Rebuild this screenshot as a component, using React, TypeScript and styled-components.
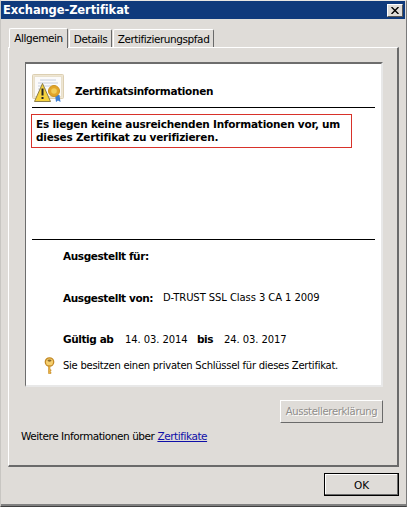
import React from "react";
import styled, { createGlobalStyle } from "styled-components";

const Global = createGlobalStyle`
  html, body { margin: 0; padding: 0; background: #dfdcd8; }
  body { font-family: "DejaVu Sans", "Liberation Sans", sans-serif; font-size: 11px; color: #000; }
`;
const Win = styled.div`
  width: 407px; height: 507px; box-sizing: border-box; overflow: hidden;
  background: #dfdcd8; display: flex; flex-direction: column; padding-right: 1px;
  border-left: 1px solid #c8c6c2; border-top: 1px solid #e8e6e3; border-right: 1px solid #7a7a7a;
  border-bottom: 1px solid #404040; box-shadow: inset 0 -2px 0 #808080;
`;
const TitleBar = styled.div`
  height: 18px; flex: none; background: #0f3a7c; color: #fff; display: flex; align-items: center;
  justify-content: space-between; padding: 0 2px 0 2px; font-weight: 700; font-size: 11.5px; letter-spacing: -0.1px;
`;
const CloseBtn = styled.div`
  width: 16px; height: 13px; background: #dfdcd8; box-sizing: border-box; display: flex; align-items: center; justify-content: center;
  border: 1px solid; border-color: #fff #555 #555 #fff;
`;
const Content = styled.div`
  flex: 1; display: flex; flex-direction: column; padding: 8px 6px 0 7px;
`;
const Tabs = styled.div`
  display: flex; height: 20px; align-items: flex-end; position: relative; z-index: 1; padding-left: 1px; gap: 1px;
`;
const Tab = styled.div<{ $active?: boolean; $w: number }>`
  box-sizing: border-box; background: #dfdcd8; white-space: nowrap; display: flex; align-items: center; justify-content: center;
  height: ${p => (p.$active ? 20 : 18)}px; width: ${p => p.$w}px;
  border: 1px solid; border-color: #fff #6a6a6a transparent #fff; border-bottom: none; border-radius: 2px 2px 0 0;
  font-size: 10.5px; letter-spacing: -0.42px;
  ${p => p.$active ? "margin-bottom: -1px; padding-bottom: 1px;" : "margin-top: 2px;"}
`;
const TabPanel = styled.div`
  box-sizing: border-box; width: 391px; height: 420px; display: flex; flex-direction: column;
  border: 1px solid; border-color: #fff #6a6a6a #6a6a6a #fff; border-width: 1px 2px 2px 1px; padding: 14px 15px 0 16px;
`;
const InfoPanel = styled.div`
  box-sizing: border-box; width: 358px; height: 325px; background: #fff; display: flex; flex-direction: column;
  border-style: solid; border-width: 2px 2px 2px 1px; border-color: #6d6d6d #e8e8e8 #e8e8e8 #6d6d6d;
  padding: 9px 6px 0 6px;
`;
const Header = styled.div`
  height: 34px; flex: none; display: flex; align-items: center; gap: 10px; margin-left: -1px;
`;
const HeaderTitle = styled.div`
  font-weight: 700; font-size: 10.5px; letter-spacing: -0.33px; padding-top: 2px;
`;
const Rule = styled.div`
  height: 1px; flex: none; background: #000; width: 343px;
`;
const Warning = styled.div`
  box-sizing: border-box; width: 321px; height: 34px; margin: 6px 0 91px -1px; flex: none; white-space: nowrap;
  border: 1px solid #d8322a; padding: 3px 4px; font-weight: 700; font-size: 10.5px; letter-spacing: -0.22px; line-height: 13px;
`;
const Row = styled.div<{ $h: number }>`
  height: ${p => p.$h}px; flex: none; display: flex; align-items: center; padding-left: 31px; white-space: nowrap; font-size: 10px;
`;
const Label = styled.span<{ $w?: number }>`
  font-weight: 700; font-size: 10.5px; letter-spacing: -0.4px; ${p => p.$w ? `width: ${p.$w}px; flex: none;` : ""}
`;
const Value = styled.span<{ $w?: number }>`
  letter-spacing: -0.08px; ${p => p.$w ? `width: ${p.$w}px; flex: none;` : ""}
`;
const KeyRow = styled.div`
  display: flex; align-items: center; gap: 6px; height: 20px; padding-left: 11px; white-space: nowrap;
  font-size: 10px; letter-spacing: -0.26px;
`;
const KeyLabel = styled.span`
  margin-left: 1px;
`;
const ActionRow = styled.div`
  display: flex; justify-content: flex-end; padding: 13px 0 0 0; margin-right: -1px;
`;
const IssuerBtn = styled.div`
  box-sizing: border-box; width: 103px; height: 23px; display: flex; align-items: center; justify-content: center;
  color: #8f8d8a; text-shadow: 1px 1px 0 #fff; font-size: 10px; letter-spacing: -0.3px;
  border: 1px solid; border-color: #fff #6a6a6a #6a6a6a #fff;
`;
const MoreInfo = styled.div`
  margin: 6px 0 0 -4px; font-size: 10.5px; letter-spacing: -0.44px; height: 14px; line-height: 14px; white-space: nowrap;
`;
const MoreLink = styled.span`
  color: #0f0fa8; text-decoration: underline;
`;
const Footer = styled.div`
  display: flex; justify-content: flex-end; padding-top: 6px;
`;
const OkBtn = styled.div`
  box-sizing: border-box; width: 75px; height: 23px; display: flex; align-items: center; justify-content: center;
  border: 1px solid #000; box-shadow: inset -1px -1px 0 #6a6a6a, inset 1px 1px 0 #fff; font-size: 10.5px;
`;

const CertIcon = () => (
  <svg width="34" height="32" viewBox="0 0 34 32">
    <rect x="1.5" y="0.5" width="31" height="24" rx="1" fill="#efe6d2" stroke="#dccfb2" />
    <rect x="3.5" y="2.5" width="27" height="20" fill="#fbfafa" stroke="#e8e0cc" />
    <path d="M9 6h16M7 9h20M7 12h18M7 15h8" stroke="#c6cedd" strokeWidth="1" />
    <path d="M24 21l1 7 2-1.5 2.5 1.5-1-7z" fill="#3d7fd4" />
    <circle cx="23" cy="17" r="5.5" fill="#e2a52a" stroke="#cf931e" />
    <circle cx="23" cy="17" r="2.8" fill="#f2cc58" />
    <path d="M11.5 9.5L19.5 27.5H3.5z" fill="#f6d23d" stroke="#8d7f4a" strokeWidth="1" strokeLinejoin="round" />
    <path d="M11.5 14.5v7" stroke="#222" strokeWidth="2" />
    <rect x="10.5" y="23" width="2" height="2" fill="#222" />
  </svg>
);
const KeyIcon = () => (
  <svg width="13" height="17" viewBox="0 0 13 17">
    <circle cx="6.5" cy="5" r="4.2" fill="#f6cf6e" stroke="#c48a26" strokeWidth="1.3" />
    <ellipse cx="6.5" cy="3.6" rx="2" ry="1.1" fill="#8a6a2a" />
    <path d="M5.5 9v7.5h2.5v-1.4h-1v-1h1v-1.4h-1V9z" fill="#eeb544" stroke="#c48a26" strokeWidth="0.6" />
  </svg>
);

export default function App() {
  return (
    <Win>
      <Global />
      <TitleBar>
        <span>Exchange-Zertifikat</span>
        <CloseBtn>
          <svg width="8" height="7" viewBox="0 0 8 7"><path d="M0.5 0L7.5 7M7.5 0L0.5 7" stroke="#000" strokeWidth="1.4" /></svg>
        </CloseBtn>
      </TitleBar>
      <Content>
        <Tabs>
          <Tab $active $w={59}>Allgemein</Tab>
          <Tab $w={43}>Details</Tab>
          <Tab $w={101}>Zertifizierungspfad</Tab>
        </Tabs>
        <TabPanel>
          <InfoPanel>
            <Header>
              <CertIcon />
              <HeaderTitle>Zertifikatsinformationen</HeaderTitle>
            </Header>
            <Rule />
            <Warning>Es liegen keine ausreichenden Informationen vor, um<br />dieses Zertifikat zu verifizieren.</Warning>
            <Rule />
            <Row $h={32}><Label>Ausgestellt für:</Label></Row>
            <Row $h={51}><Label $w={100}>Ausgestellt von:</Label><Value>D-TRUST SSL Class 3 CA 1 2009</Value></Row>
            <Row $h={32}>
              <Label $w={62}>Gültig ab</Label><Value $w={72}>14. 03. 2014</Value>
              <Label $w={27}>bis</Label><Value>24. 03. 2017</Value>
            </Row>
            <KeyRow><KeyIcon /><KeyLabel>Sie besitzen einen privaten Schlüssel für dieses Zertifikat.</KeyLabel></KeyRow>
          </InfoPanel>
          <ActionRow><IssuerBtn>Ausstellererklärung</IssuerBtn></ActionRow>
          <MoreInfo>Weitere Informationen über <MoreLink>Zertifikate</MoreLink></MoreInfo>
        </TabPanel>
        <Footer><OkBtn>OK</OkBtn></Footer>
      </Content>
    </Win>
  );
}
